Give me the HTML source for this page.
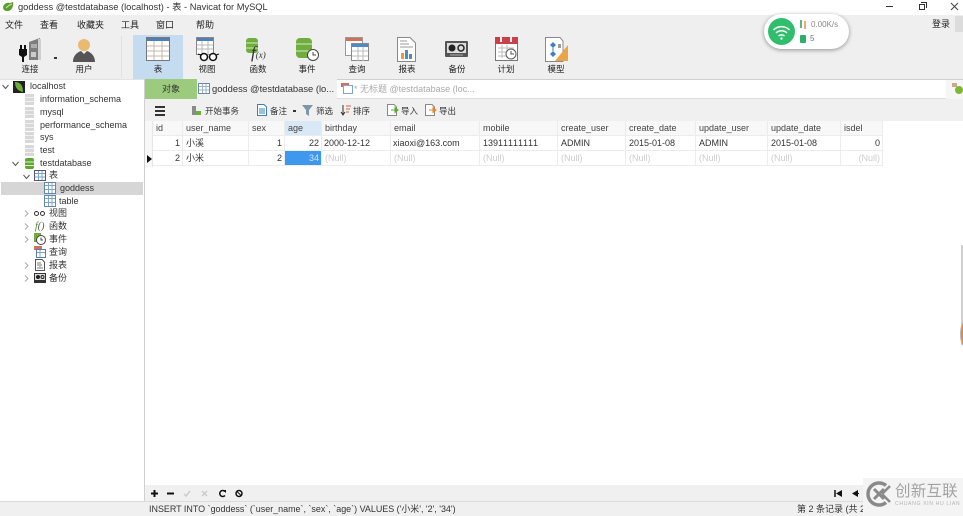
<!DOCTYPE html>
<html lang="zh">
<head>
<meta charset="utf-8">
<title>Navicat</title>
<style>
*{box-sizing:border-box}
html,body{margin:0;padding:0;width:963px;height:516px;overflow:hidden;background:#fff}
body{position:relative;font-family:"Liberation Sans","Noto Sans CJK SC",sans-serif;font-size:9px;color:#222}
.a{position:absolute;white-space:nowrap}
.m{top:19px;font-size:9px;color:#222;line-height:12px}
.tl{top:64px;width:50px;text-align:center;font-size:8.5px;line-height:11px;color:#222}
.tr{font-size:9px;line-height:13px;color:#333}
.cell{position:absolute;height:15px;line-height:15px;font-size:9px;padding:0 2px 0 3px;white-space:nowrap;overflow:hidden;border-right:1px solid #ececec;border-bottom:1px solid #ececec;color:#333;font-kerning:none}
.h{background:#f8f8f8;height:15px;color:#444}
.n{color:#cdcdcd}
.r{text-align:right}
.tb{top:105px;font-size:8.5px;line-height:12px;color:#333}
svg{position:absolute;display:block}
.db{position:absolute;left:25px;width:9px;height:11px;background:repeating-linear-gradient(#d8d8d8 0 3px,#f0f0f0 3px 4px)}
</style>
</head>
<body>
<!-- toolbar bg -->
<div class="a" style="left:0;top:15px;width:963px;height:64px;background:#efefef"></div>
<!-- title -->
<svg style="left:2px;top:1px" width="13" height="12" viewBox="0 0 13 12"><path d="M1 7C1 3 5 1 8 2L11 1C12 4 10 10 6 10C4 10 2 10 1 7Z" fill="#5a9e2e"/><path d="M4 7C6 5 7 4 10 3" stroke="#cfe6b0" fill="none"/></svg>
<div class="a" style="left:18px;top:1px;font-size:9.3px;line-height:12px;color:#333">goddess @testdatabase (localhost) - 表 - Navicat for MySQL</div>
<!-- window controls -->
<div class="a" style="left:886px;top:6px;width:7px;height:1px;background:#333"></div>
<div class="a" style="left:919px;top:4px;width:6px;height:6px;border:1px solid #333;background:#fff"></div>
<div class="a" style="left:921px;top:2px;width:6px;height:6px;border-top:1px solid #333;border-right:1px solid #333"></div>
<svg style="left:950px;top:2px" width="10" height="10" viewBox="0 0 10 10"><path d="M1 1L8 8M8 1L1 8" stroke="#444" fill="none"/></svg>
<!-- menu -->
<div class="a m" style="left:5px">文件</div>
<div class="a m" style="left:40px">查看</div>
<div class="a m" style="left:77px">收藏夹</div>
<div class="a m" style="left:121px">工具</div>
<div class="a m" style="left:156px">窗口</div>
<div class="a m" style="left:196px">帮助</div>
<div class="a" style="left:932px;top:18px;font-size:9px;line-height:12px;color:#222">登录</div>
<div class="a" style="left:955px;top:16px;width:8px;height:16px;background:#dcdcdc"></div>
<!-- toolbar selected -->
<div class="a" style="left:133px;top:35px;width:50px;height:44px;background:#c5dcf0"></div>
<div class="a" style="left:121px;top:36px;width:1px;height:42px;background:#e0e0e0"></div>
<!-- connect icon -->
<svg style="left:18px;top:37px" width="26" height="26" viewBox="0 0 26 26">
<path d="M11 5L22 1V23H11Z" fill="#7d7d7d"/><path d="M20 2h3v21h-3z" fill="#cfcfcf"/><path d="M13 8h6M13 10h6" stroke="#ddd"/><rect x="13" y="15" width="5" height="5" fill="#ccc"/>
<path d="M3 8v5M7 8v5" stroke="#111" stroke-width="2"/><path d="M1 12h8v6l-3 2v5H4v-5l-3-2z" fill="#111"/></svg>
<div class="a" style="left:54px;top:57px;width:3px;height:2px;background:#333"></div>
<div class="a tl" style="left:5px">连接</div>
<!-- user -->
<svg style="left:72px;top:37px" width="24" height="26" viewBox="0 0 24 26"><circle cx="12" cy="8" r="6" fill="#e8bb70"/><path d="M1 25C1 18 6 15 9 14L12 17L15 14C18 15 23 18 23 25Z" fill="#555"/></svg>
<div class="a tl" style="left:59px">用户</div>
<!-- table -->
<svg style="left:146px;top:37px" width="25" height="25" viewBox="0 0 25 25"><rect x=".5" y=".5" width="23" height="23" fill="#fff" stroke="#777"/><rect x="1" y="1" width="22" height="3" fill="#4f7fb3"/><path d="M1 9h22M1 14h22M1 19h22M8 4v19M16 4v19" stroke="#c4b9a8"/></svg>
<div class="a tl" style="left:133px">表</div>
<!-- view -->
<svg style="left:196px;top:37px" width="24" height="26" viewBox="0 0 24 26"><rect x=".5" y=".5" width="17" height="17" fill="#fff" stroke="#888"/><rect x="1" y="1" width="16" height="3" fill="#4f7fb3"/><path d="M1 8h16M1 12h16M6 4v14M12 4v14" stroke="#b8b8b8"/><circle cx="8" cy="20" r="3.5" fill="#fff" stroke="#111" stroke-width="1.5"/><circle cx="17" cy="20" r="3.5" fill="#fff" stroke="#111" stroke-width="1.5"/><path d="M2 17l3 1M23 17l-3 1" stroke="#111"/></svg>
<div class="a tl" style="left:182px">视图</div>
<!-- function -->
<svg style="left:246px;top:37px" width="24" height="25" viewBox="0 0 24 25"><rect x="0" y="1" width="12" height="15" rx="3" fill="#6fae3d"/><path d="M0 6h12M0 11h12" stroke="#d7e9c5"/></svg>
<div class="a" style="left:251px;top:44px;font-family:'Liberation Serif',serif;font-style:italic;font-size:17px;line-height:18px;color:#333">f<span style="font-size:9px">(x)</span></div>
<div class="a tl" style="left:233px">函数</div>
<!-- event -->
<svg style="left:296px;top:37px" width="24" height="25" viewBox="0 0 24 25"><rect x="0" y="1" width="16" height="20" rx="4" fill="#6fae3d"/><path d="M0 7h16M0 14h16" stroke="#d7e9c5"/><circle cx="17" cy="18" r="5.5" fill="#fff" stroke="#444"/><path d="M17 15v3h3" stroke="#444" fill="none"/></svg>
<div class="a tl" style="left:282px">事件</div>
<!-- query -->
<svg style="left:345px;top:37px" width="24" height="25" viewBox="0 0 24 25"><rect x=".5" y=".5" width="17" height="18" fill="#fff" stroke="#999"/><rect x="1" y="1" width="16" height="3" fill="#d0705c"/><rect x="6.5" y="6.5" width="17" height="17" fill="#fff" stroke="#888"/><rect x="7" y="7" width="16" height="3" fill="#4f8ac4"/><path d="M7 14h16M7 19h16M13 10v14M18 10v14" stroke="#bbb"/></svg>
<div class="a tl" style="left:332px">查询</div>
<!-- report -->
<svg style="left:397px;top:37px" width="20" height="25" viewBox="0 0 20 25"><path d="M.5.5H13L18.5 6V24.5H.5Z" fill="#fff" stroke="#888"/><path d="M3 4h7M3 7h9M3 10h13" stroke="#999"/><rect x="4" y="16" width="3" height="6" fill="#e89a3c"/><rect x="8" y="13" width="3" height="9" fill="#4f8ac4"/><rect x="12" y="17" width="3" height="5" fill="#4f8ac4"/></svg>
<div class="a tl" style="left:382px">报表</div>
<!-- backup -->
<svg style="left:445px;top:41px" width="23" height="17" viewBox="0 0 23 17"><rect width="23" height="16" rx="1" fill="#555"/><rect x="2" y="2" width="19" height="10" fill="#ddd"/><circle cx="7" cy="7" r="3.5" fill="#222"/><circle cx="16" cy="7" r="3" fill="none" stroke="#222" stroke-width="1.5"/><path d="M5 14h13" stroke="#aaa"/></svg>
<div class="a tl" style="left:432px">备份</div>
<!-- schedule -->
<svg style="left:495px;top:37px" width="24" height="25" viewBox="0 0 24 25"><rect x=".5" y=".5" width="22" height="23" fill="#fff" stroke="#777"/><rect x="0" y="0" width="23" height="7" fill="#c8404a"/><path d="M6 0v5M16 0v5" stroke="#eee" stroke-width="2"/><path d="M3 11h16M3 15h12M3 19h10M7 8v13M12 8v13" stroke="#bbb"/><circle cx="16" cy="17" r="5" fill="#fff" stroke="#555"/><path d="M16 14v3h3" stroke="#555" fill="none"/></svg>
<div class="a tl" style="left:481px">计划</div>
<!-- model -->
<svg style="left:545px;top:37px" width="24" height="25" viewBox="0 0 24 25"><path d="M.5.5H15L18 4V24.5H.5Z" fill="#fff" stroke="#888"/><path d="M23 8V24H10Z" fill="#e9a446"/><path d="M5 8l3-3 3 3-3 3zM5 17l3-3 3 3-3 3z" fill="#3f7fc4"/><path d="M8 11v3" stroke="#3f7fc4"/><rect x="13" y="7" width="3" height="4" fill="#999"/></svg>
<div class="a tl" style="left:531px">模型</div>
<!-- wifi widget -->
<div class="a" style="left:764px;top:14px;width:85px;height:35px;border-radius:18px;background:#fff;box-shadow:0 1px 4px rgba(0,0,0,.4)"></div>
<div class="a" style="left:768px;top:18px;width:27px;height:27px;border-radius:50%;background:#2fbe6c"></div>
<svg style="left:768px;top:18px" width="27" height="27" viewBox="0 0 27 27"><path d="M5.5 12C10 7.5 17 7.5 21.5 12M8 15C11 12 16 12 19 15M10.5 18C12 16.5 15 16.5 16.5 18" stroke="#fff" stroke-width="1.5" fill="none"/><circle cx="13.5" cy="20.5" r="1.2" fill="#fff"/></svg>
<svg style="left:799px;top:20px" width="8" height="9" viewBox="0 0 8 9"><path d="M2 0v8" stroke="#2a9a58" stroke-width="1.5"/><path d="M6 1v8" stroke="#e89040" stroke-width="1.5"/></svg>
<div class="a" style="left:811px;top:19px;font-size:8px;line-height:11px;color:#888">0.00K/s</div>
<div class="a" style="left:800px;top:35px;width:6px;height:8px;background:#2fae68;border-radius:1px"></div>
<div class="a" style="left:810px;top:33px;font-size:8px;line-height:11px;color:#777">5</div>

<!-- sidebar -->
<div class="a" style="left:144px;top:79px;width:1px;height:423px;background:#d0d0d0"></div>
<div class="a" style="left:0;top:79px;width:144px;height:1px;background:#e2e2e2"></div>
<svg style="left:2px;top:84px" width="7" height="6" viewBox="0 0 7 6"><path d="M.5 1L3.5 4.5L6.5 1" stroke="#555" fill="none"/></svg>
<svg style="left:13px;top:81px" width="12" height="12" viewBox="0 0 12 12"><rect width="12" height="12" fill="#222"/><path d="M2 1C7 1 10 4 10 11C5 10 2 7 2 1Z" fill="#6fae3d"/></svg>
<div class="a tr" style="left:30px;top:80px">localhost</div>
<div class="db" style="top:94px"></div>
<div class="a tr" style="left:40px;top:93px">information_schema</div>
<div class="db" style="top:107px"></div>
<div class="a tr" style="left:40px;top:106px">mysql</div>
<div class="db" style="top:120px"></div>
<div class="a tr" style="left:40px;top:119px">performance_schema</div>
<div class="db" style="top:132px"></div>
<div class="a tr" style="left:40px;top:131px">sys</div>
<div class="db" style="top:145px"></div>
<div class="a tr" style="left:40px;top:144px">test</div>
<svg style="left:12px;top:161px" width="7" height="6" viewBox="0 0 7 6"><path d="M.5 1L3.5 4.5L6.5 1" stroke="#555" fill="none"/></svg>
<svg style="left:25px;top:158px" width="9" height="11" viewBox="0 0 9 11"><rect width="9" height="11" rx="2" fill="#5ea832"/><path d="M0 4h9M0 7.5h9" stroke="#dff0cc"/></svg>
<div class="a tr" style="left:40px;top:157px">testdatabase</div>
<svg style="left:23px;top:174px" width="7" height="6" viewBox="0 0 7 6"><path d="M.5 1L3.5 4.5L6.5 1" stroke="#555" fill="none"/></svg>
<svg style="left:34px;top:170px" width="12" height="11" viewBox="0 0 12 11"><rect x=".5" y=".5" width="11" height="10" fill="#fff" stroke="#557"/><path d="M1 3.5h10M1 7h10M4.5 1v9M8 1v9" stroke="#7fa5cc"/></svg>
<div class="a tr" style="left:49px;top:169px">表</div>
<div class="a" style="left:1px;top:182px;width:142px;height:13px;background:#d6d6d6"></div>
<svg style="left:44px;top:182px" width="12" height="12" viewBox="0 0 12 12"><rect x=".5" y=".5" width="11" height="11" fill="#fff" stroke="#5f87ad"/><path d="M1 3.5h10M1 7.5h10M4.5 1v10M8 1v10" stroke="#7fa5cc"/></svg>
<div class="a tr" style="left:60px;top:182px">goddess</div>
<svg style="left:44px;top:195px" width="12" height="12" viewBox="0 0 12 12"><rect x=".5" y=".5" width="11" height="11" fill="#fff" stroke="#5f87ad"/><path d="M1 3.5h10M1 7.5h10M4.5 1v10M8 1v10" stroke="#7fa5cc"/></svg>
<div class="a tr" style="left:59px;top:195px">table</div>
<svg style="left:24px;top:210px" width="5" height="7" viewBox="0 0 5 7"><path d="M1 .5L4 3.5L1 6.500" stroke="#aaa" fill="none"/></svg>
<div class="a" style="left:34px;top:211px;width:5px;height:5px;border:1px solid #333;border-radius:50%"></div>
<div class="a" style="left:40px;top:211px;width:5px;height:5px;border:1px solid #333;border-radius:50%"></div>
<div class="a tr" style="left:49px;top:207px">视图</div>
<svg style="left:24px;top:223px" width="5" height="7" viewBox="0 0 5 7"><path d="M1 .5L4 3.5L1 6.500" stroke="#aaa" fill="none"/></svg>
<div class="a" style="left:35px;top:220px;font-family:'Liberation Serif',serif;font-style:italic;font-size:10px;line-height:13px;color:#4a8a2a">f<span style="color:#555">()</span></div>
<div class="a tr" style="left:49px;top:220px">函数</div>
<svg style="left:24px;top:236px" width="5" height="7" viewBox="0 0 5 7"><path d="M1 .5L4 3.5L1 6.500" stroke="#aaa" fill="none"/></svg>
<svg style="left:34px;top:233px" width="12" height="12" viewBox="0 0 12 12"><rect width="7" height="9" fill="#6fae3d"/><circle cx="7" cy="7" r="4.5" fill="#fff" stroke="#444"/><path d="M7 4.5v2.5h2" stroke="#444" fill="none"/></svg>
<div class="a tr" style="left:49px;top:233px">事件</div>
<svg style="left:34px;top:246px" width="12" height="12" viewBox="0 0 12 12"><rect x="0" y="0" width="8" height="4" fill="#d0705c"/><rect x="2.5" y="3.5" width="9" height="8" fill="#fff" stroke="#4f7fb3"/><path d="M3 6.5h8M6 4v7" stroke="#7fa5cc"/></svg>
<div class="a tr" style="left:49px;top:246px">查询</div>
<svg style="left:24px;top:262px" width="5" height="7" viewBox="0 0 5 7"><path d="M1 .5L4 3.5L1 6.500" stroke="#aaa" fill="none"/></svg>
<svg style="left:35px;top:259px" width="10" height="12" viewBox="0 0 10 12"><path d="M.5.5H7L9.5 3V11.5H.5Z" fill="#fff" stroke="#555"/><path d="M2 4h4M2 6h5M3 10V8M5 10V7M7 10V8" stroke="#777"/></svg>
<div class="a tr" style="left:49px;top:259px">报表</div>
<svg style="left:24px;top:275px" width="5" height="7" viewBox="0 0 5 7"><path d="M1 .5L4 3.5L1 6.500" stroke="#aaa" fill="none"/></svg>
<svg style="left:34px;top:273px" width="12" height="10" viewBox="0 0 12 10"><rect width="12" height="10" fill="#333"/><rect x="1" y="1" width="10" height="6" fill="#ddd"/><circle cx="4" cy="4" r="2" fill="#222"/><circle cx="8.5" cy="4" r="1.5" fill="none" stroke="#222"/></svg>
<div class="a tr" style="left:49px;top:272px">备份</div>

<!-- tabs -->
<div class="a" style="left:145px;top:79px;width:818px;height:20px;background:#fff;border-top:1px solid #cfcfcf;border-bottom:1px solid #dedede"></div>
<div class="a" style="left:145px;top:79px;width:52px;height:20px;background:#9ccb7e;text-align:center;line-height:20px;font-size:9px;color:#333">对象</div>
<div class="a" style="left:197px;top:79px;width:140px;height:20px;background:#f0f0f0"></div>
<svg style="left:198px;top:83px" width="12" height="11" viewBox="0 0 12 11"><rect x=".5" y=".5" width="11" height="10" fill="#fff" stroke="#6b8aa8"/><path d="M1 3.5h10M1 7h10M4.5 1v9M8 1v9" stroke="#9db5cc"/></svg>
<div class="a" style="left:212px;top:83px;font-size:9.4px;line-height:12px;color:#333">goddess @testdatabase (lo...</div>
<svg style="left:341px;top:83px" width="12" height="11" viewBox="0 0 12 11"><rect x="0" y="0" width="8" height="4" fill="#d0705c"/><rect x="2.5" y="2.5" width="9" height="8" fill="#fff" stroke="#7fa5cc"/></svg>
<div class="a" style="left:354px;top:83px;font-size:9px;line-height:12px;color:#aaa">* 无标题 @testdatabase (loc...</div>
<div class="a" style="left:946px;top:80px;width:17px;height:19px;background:#f6f6f6"></div>
<svg style="left:952px;top:83px" width="11" height="12" viewBox="0 0 11 12"><rect x="0" y="0" width="5" height="4" fill="#c7a987"/><circle cx="7" cy="7" r="4" fill="#7cb832"/></svg>
<!-- sub toolbar -->
<div class="a" style="left:145px;top:99px;width:818px;height:22px;background:#f0f0f0"></div>
<div class="a" style="left:155px;top:106px;width:10px;height:2px;background:#333"></div>
<div class="a" style="left:155px;top:110px;width:10px;height:2px;background:#333"></div>
<div class="a" style="left:155px;top:114px;width:10px;height:2px;background:#333"></div>
<svg style="left:191px;top:105px" width="11" height="11" viewBox="0 0 11 11"><path d="M1 1h4v9H1z" fill="#8a8a8a"/><path d="M5 6h5v4H5z" fill="#6fae3d"/></svg>
<div class="a tb" style="left:205px">开始事务</div>
<svg style="left:257px;top:104px" width="10" height="12" viewBox="0 0 10 12"><path d="M.5.5H7L9.5 3V11.5H.5Z" fill="#fff" stroke="#3f7fb4"/><path d="M2 5h6M2 7h6M2 9h6" stroke="#3f7fb4"/></svg>
<div class="a tb" style="left:270px">备注</div>
<div class="a" style="left:293px;top:110px;width:3px;height:2px;background:#333"></div>
<svg style="left:302px;top:105px" width="11" height="11" viewBox="0 0 11 11"><path d="M0 0H11L7 5V11L4 9V5Z" fill="#7a98a8"/></svg>
<div class="a tb" style="left:316px">筛选</div>
<svg style="left:340px;top:105px" width="11" height="11" viewBox="0 0 11 11"><path d="M3 0v9M1 7l2 3 2-3" stroke="#333" fill="none"/><path d="M6 1h5M6 4h4M6 7h3" stroke="#c86a30"/></svg>
<div class="a tb" style="left:353px">排序</div>
<svg style="left:387px;top:104px" width="12" height="12" viewBox="0 0 12 12"><path d="M.5.5H7L9.5 3V11.5H.5Z" fill="#fff" stroke="#888"/><path d="M4 6h6M8 3.5L11 6L8 8.5Z" fill="#5ea832" stroke="#5ea832"/></svg>
<div class="a tb" style="left:401px">导入</div>
<svg style="left:425px;top:104px" width="12" height="12" viewBox="0 0 12 12"><path d="M.5.5H7L9.5 3V11.5H.5Z" fill="#fff" stroke="#888"/><path d="M4 6h6M8 3.5L11 6L8 8.5Z" fill="#e8862c" stroke="#e8862c"/></svg>
<div class="a tb" style="left:439px">导出</div>

<!-- grid: header -->
<div class="a" style="left:145px;top:121px;width:8px;height:46px;background:#f8f8f8;border-right:1px solid #e6e6e6"></div>
<div class="cell h" style="left:153px;top:121px;width:30px">id</div>
<div class="cell h" style="left:183px;top:121px;width:66px">user_name</div>
<div class="cell h" style="left:249px;top:121px;width:36px">sex</div>
<div class="cell h" style="left:285px;top:121px;width:37px;background:#d9e8f6">age</div>
<div class="cell h" style="left:322px;top:121px;width:69px">birthday</div>
<div class="cell h" style="left:391px;top:121px;width:89px">email</div>
<div class="cell h" style="left:480px;top:121px;width:78px">mobile</div>
<div class="cell h" style="left:558px;top:121px;width:68px">create_user</div>
<div class="cell h" style="left:626px;top:121px;width:70px">create_date</div>
<div class="cell h" style="left:696px;top:121px;width:72px">update_user</div>
<div class="cell h" style="left:768px;top:121px;width:73px">update_date</div>
<div class="cell h" style="left:841px;top:121px;width:42px">isdel</div>
<!-- row 1 -->
<div class="cell r" style="left:153px;top:136px;width:30px">1</div>
<div class="cell" style="left:183px;top:136px;width:66px">小溪</div>
<div class="cell r" style="left:249px;top:136px;width:36px">1</div>
<div class="cell r" style="left:285px;top:136px;width:37px">22</div>
<div class="cell" style="left:322px;top:136px;width:69px;padding-left:2px">2000-12-12</div>
<div class="cell" style="left:391px;top:136px;width:89px;padding-left:2px">xiaoxi@163.com</div>
<div class="cell" style="left:480px;top:136px;width:78px">13911111111</div>
<div class="cell" style="left:558px;top:136px;width:68px">ADMIN</div>
<div class="cell" style="left:626px;top:136px;width:70px">2015-01-08</div>
<div class="cell" style="left:696px;top:136px;width:72px">ADMIN</div>
<div class="cell" style="left:768px;top:136px;width:73px">2015-01-08</div>
<div class="cell r" style="left:841px;top:136px;width:42px">0</div>
<!-- row 2 -->
<svg style="left:147px;top:155px" width="5" height="8" viewBox="0 0 5 8"><path d="M0 0L5 4L0 8Z" fill="#111"/></svg>
<div class="cell r" style="left:153px;top:151px;width:30px">2</div>
<div class="cell" style="left:183px;top:151px;width:66px">小米</div>
<div class="cell r" style="left:249px;top:151px;width:36px">2</div>
<div class="cell r" style="left:285px;top:151px;width:37px;background:#3d98ee;color:#cfe4fa">34</div>
<div class="cell n" style="left:322px;top:151px;width:69px">(Null)</div>
<div class="cell n" style="left:391px;top:151px;width:89px">(Null)</div>
<div class="cell n" style="left:480px;top:151px;width:78px">(Null)</div>
<div class="cell n" style="left:558px;top:151px;width:68px">(Null)</div>
<div class="cell n" style="left:626px;top:151px;width:70px">(Null)</div>
<div class="cell n" style="left:696px;top:151px;width:72px">(Null)</div>
<div class="cell n" style="left:768px;top:151px;width:73px">(Null)</div>
<div class="cell n r" style="left:841px;top:151px;width:42px">(Null)</div>

<!-- right edge -->
<div class="a" style="left:961px;top:245px;width:2px;height:100px;background:#cfcfcf"></div>
<div class="a" style="left:960px;top:322px;width:8px;height:24px;border-radius:50%;background:#e9883a;border:1px solid #aeb8c4"></div>

<!-- bottom nav -->
<div class="a" style="left:145px;top:485px;width:818px;height:16px;background:#f0f0f0"></div>
<div class="a" style="left:145px;top:501px;width:818px;height:15px;background:#f0f0f0;border-top:1px solid #dcdcdc"></div>
<div class="a" style="left:0;top:501px;width:145px;height:15px;background:#f0f0f0;border-top:1px solid #dcdcdc"></div>
<svg style="left:150px;top:489px" width="95" height="9" viewBox="0 0 95 9">
<path d="M1 4.5h7M4.5 1v7" stroke="#111" stroke-width="2"/>
<path d="M17 4.5h7" stroke="#111" stroke-width="2"/>
<path d="M34 5l2 2 4-5" stroke="#ccc" stroke-width="1.5" fill="none"/>
<path d="M52 2l5 5M57 2l-5 5" stroke="#ccc" stroke-width="1.5"/>
<path d="M75 2.5A3 3 0 1 0 75 6.5" stroke="#111" stroke-width="1.5" fill="none"/><path d="M73 1l3 0 0 3z" fill="#111"/>
<circle cx="89" cy="4.5" r="3" stroke="#111" stroke-width="1.5" fill="none"/><path d="M87 2.5l4 4" stroke="#111"/>
</svg>
<div class="a" style="left:149px;top:503px;font-size:8.95px;line-height:12px;color:#333">INSERT INTO `goddess` (`user_name`, `sex`, `age`) VALUES ('小米', '2', '34')</div>
<div class="a" style="left:797px;top:503px;font-size:9px;line-height:12px;color:#333">第 2 条记录 (共 2</div>
<svg style="left:834px;top:489px" width="26" height="9" viewBox="0 0 26 9"><path d="M1 1v7" stroke="#111" stroke-width="1.5"/><path d="M8 1L2 4.5L8 8Z" fill="#111"/><path d="M24 1L18 4.5L24 8Z" fill="#111"/><path d="M22 4.5h3" stroke="#111"/></svg>
<!-- watermark -->
<div class="a" style="left:863px;top:478px;width:100px;height:38px;background:#f4f4f4"></div>
<svg style="left:866px;top:481px" width="26" height="26" viewBox="0 0 26 26"><path d="M20 4.500A11 11 0 1 0 20 21.500" fill="none" stroke="#8a8a8a" stroke-width="3.5"/><path d="M8 8L18 18M18 8L8 18" stroke="#8a8a8a" stroke-width="3"/><path d="M16 13L24 5M16 13L24 21" stroke="#8a8a8a" stroke-width="2.500"/></svg>
<div class="a" style="left:895px;top:482px;font-size:15.500px;line-height:19px;color:#a2a2a2;letter-spacing:.2px">创新互联</div>
<div class="a" style="left:895px;top:501px;font-size:5.200px;line-height:7px;color:#b4b4b4;letter-spacing:.6px">CHUANG XIN HU LIAN</div>
</body>
</html>
